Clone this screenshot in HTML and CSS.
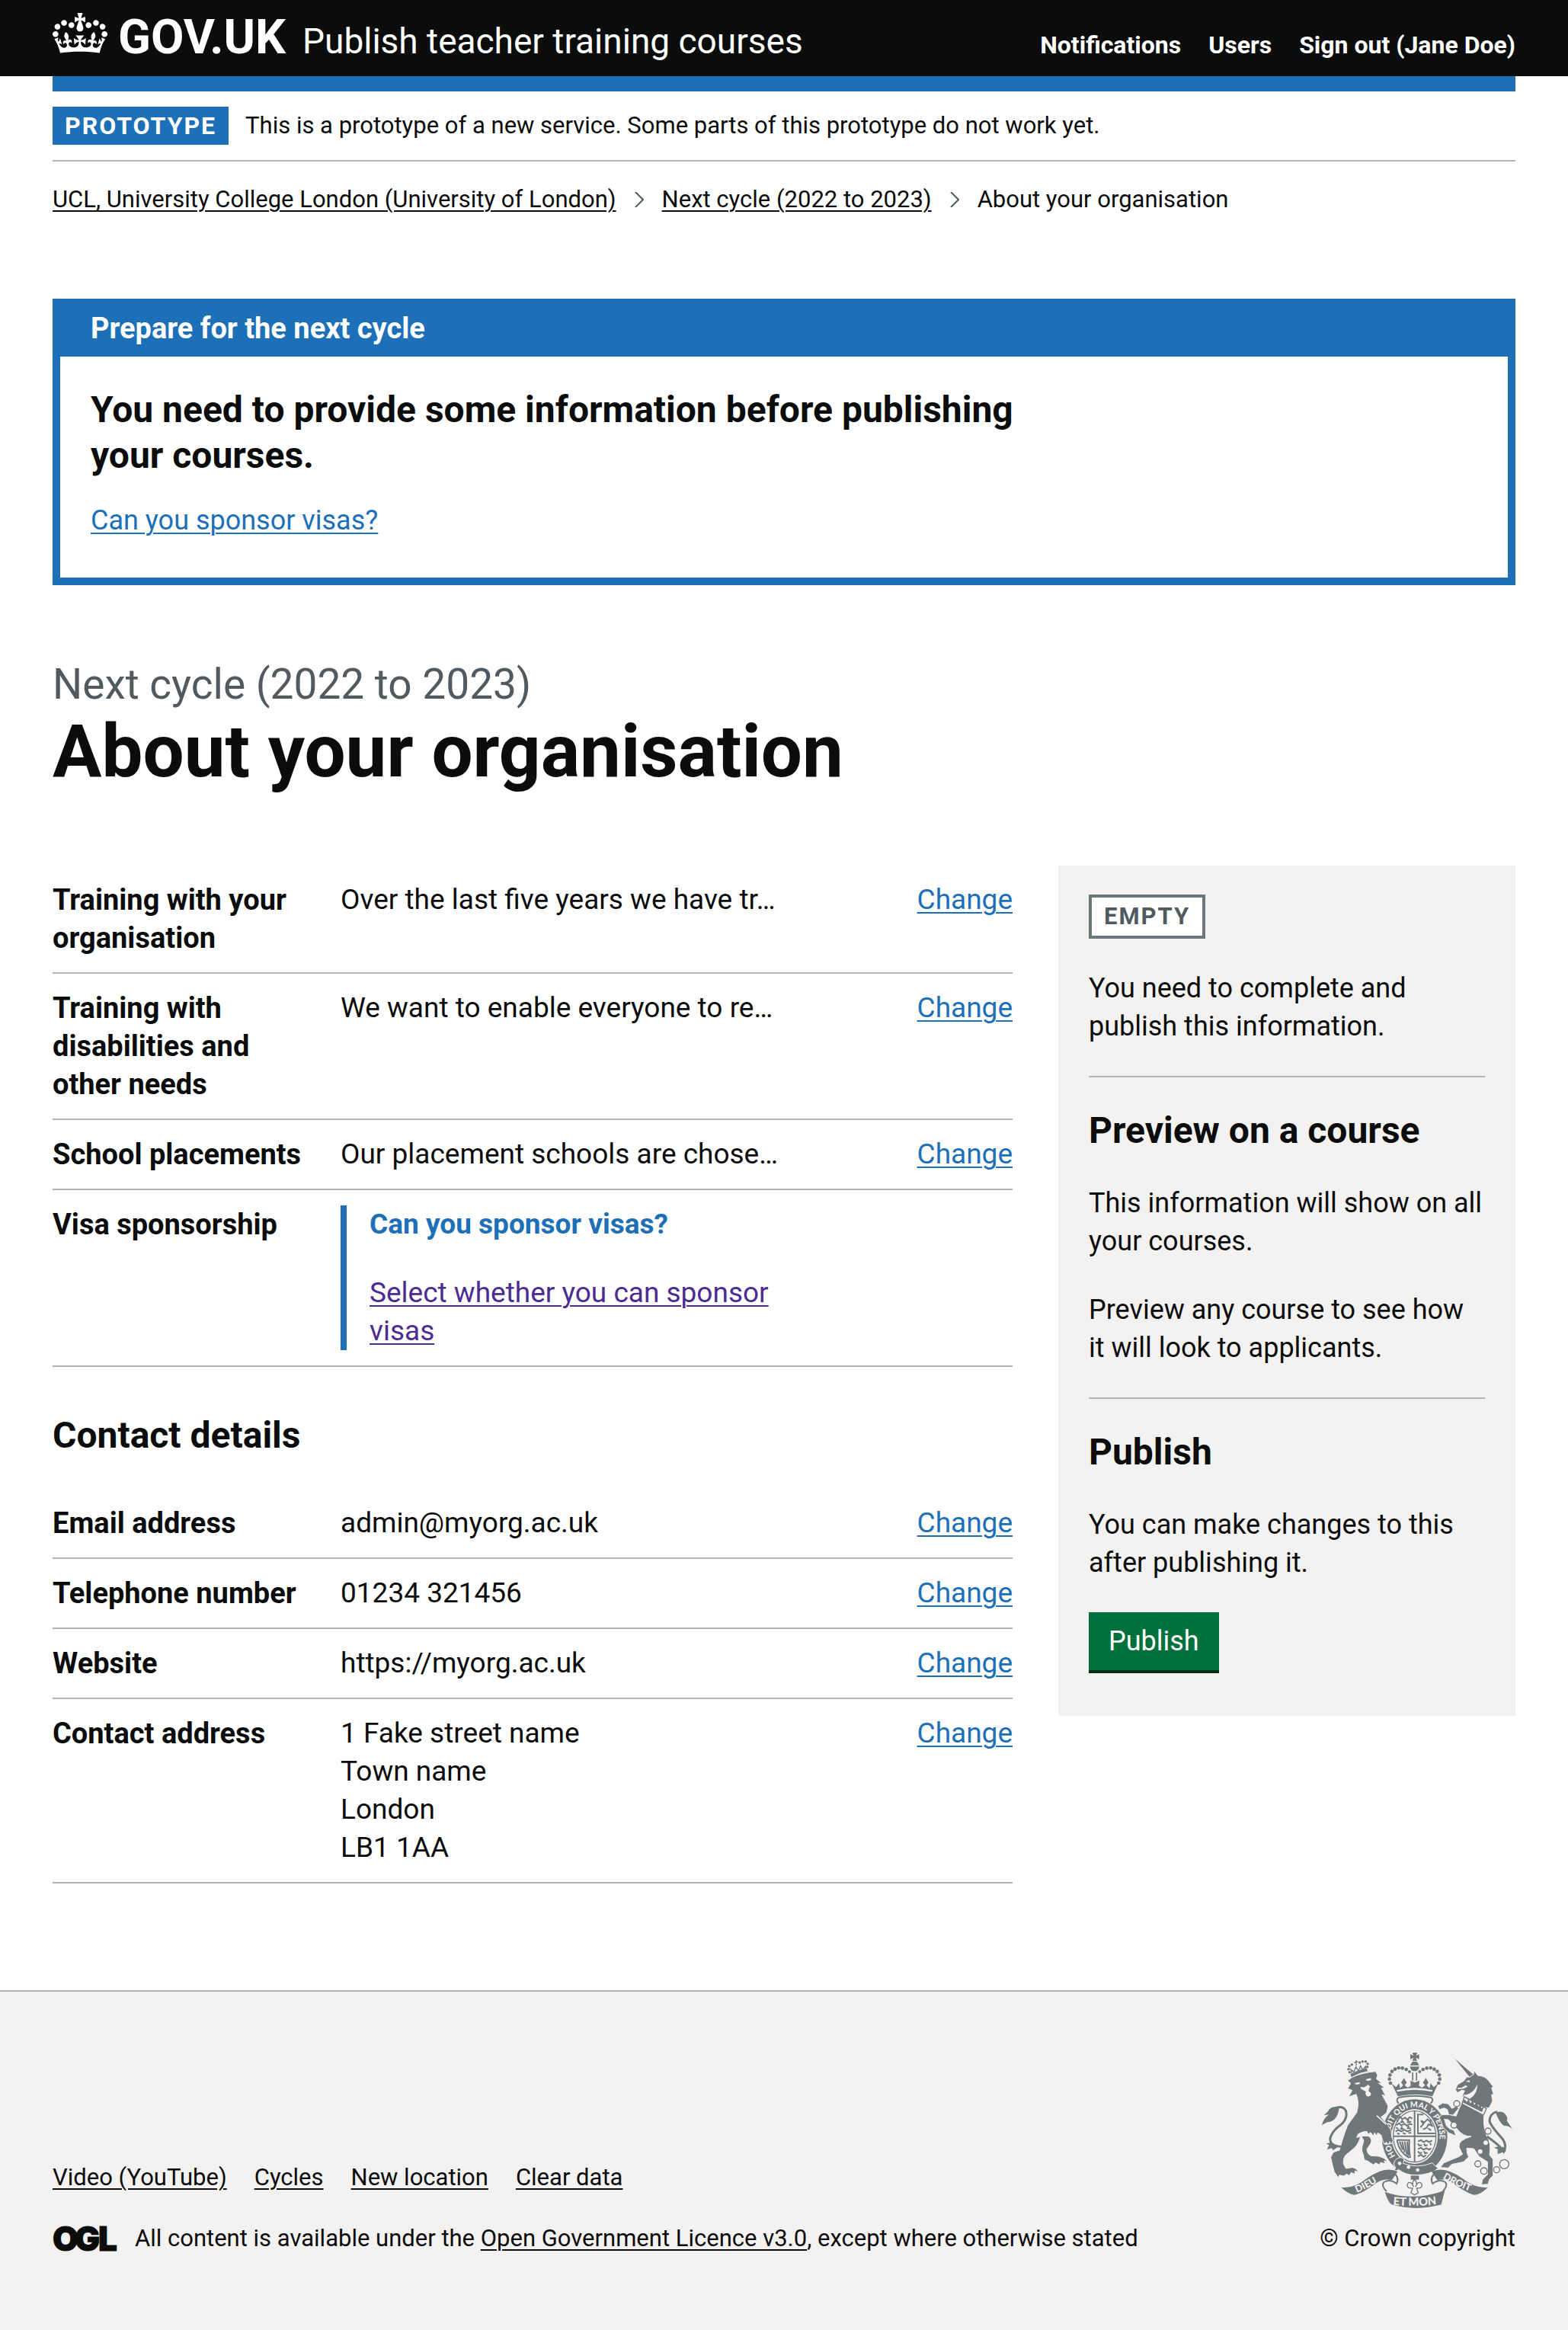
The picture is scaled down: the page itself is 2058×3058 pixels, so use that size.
FILE: index.html
```html
<!DOCTYPE html>
<html lang="en">
<head>
<meta charset="utf-8">
<meta name="viewport" content="width=device-width, initial-scale=1">
<title>About your organisation - Publish teacher training courses</title>
<link rel="stylesheet" href="styles.css">
</head>
<body>
<header class="header">
  <div class="container header-inner">
    <a class="logo" href="#">
      <svg class="crown" viewBox="0 0 132 97" aria-hidden="true"><path fill="currentColor" fill-rule="evenodd" d="M25 30.2c3.5 1.5 7.7-.2 9.1-3.7 1.5-3.6-.2-7.8-3.9-9.2-3.6-1.4-7.6.3-9.1 3.9-1.4 3.5.3 7.5 3.9 9zM9 39.5c3.6 1.5 7.8-.2 9.2-3.7 1.5-3.6-.2-7.8-3.9-9.1-3.6-1.5-7.6.2-9.1 3.8-1.4 3.5.3 7.5 3.8 9zM4.4 57.2c3.5 1.5 7.7-.2 9.1-3.8 1.5-3.6-.2-7.7-3.9-9.1-3.5-1.5-7.6.3-9.1 3.8-1.4 3.5.3 7.6 3.9 9.1zm38.3-21.4c3.5 1.5 7.7-.2 9.1-3.8 1.5-3.6-.2-7.7-3.9-9.1-3.6-1.5-7.6.3-9.1 3.8-1.3 3.6.4 7.7 3.9 9.1zm64.4-5.6c-3.6 1.5-7.8-.2-9.1-3.7-1.5-3.6.2-7.8 3.8-9.2 3.6-1.4 7.7.3 9.2 3.9 1.3 3.5-.4 7.5-3.9 9zm15.9 9.3c-3.6 1.5-7.7-.2-9.1-3.7-1.5-3.6.2-7.8 3.7-9.1 3.6-1.5 7.7.2 9.2 3.8 1.5 3.5-.3 7.5-3.8 9zm4.7 17.7c-3.6 1.5-7.8-.2-9.2-3.8-1.5-3.6.2-7.7 3.9-9.1 3.6-1.5 7.7.3 9.2 3.8 1.3 3.5-.4 7.6-3.9 9.1zM89.3 35.8c-3.6 1.5-7.8-.2-9.2-3.8-1.4-3.6.2-7.7 3.9-9.1 3.6-1.5 7.7.3 9.2 3.8 1.4 3.6-.3 7.7-3.9 9.1zM69.7 17.7l8.9 4.7V9.3l-8.9 2.8c-.2-.3-.5-.6-.9-.9L72.4 0H59.6l3.5 11.2c-.3.3-.6.5-.9.9l-8.8-2.8v13.1l8.8-4.7c.3.3.6.7.9.9l-5 15.4v.1c-.2.8-.4 1.6-.4 2.4 0 4.1 3.1 7.5 7 8.1h.2c.3 0 .7.1 1 .1.4 0 .7 0 1-.1h.2c4-.6 7.1-4.1 7.1-8.1 0-.8-.1-1.7-.4-2.4V34l-5.1-15.4c.4-.2.7-.6 1-.9zM66 92.8c16.9 0 32.8 1.1 47.1 3.2 4-16.9 8.9-26.7 14-33.5l-9.6-3.4c1 4.9 1.1 7.2 0 10.2-1.5-1.4-3-4.3-4.2-8.7L108.6 76c2.8-2 5-3.2 7.5-3.3-4.4 9.4-10 11.9-13.6 11.2-4.3-.8-6.3-4.6-5.6-7.9 1-4.7 5.7-5.9 8-.5 4.3-8.7-3-11.4-7.6-8.8 7.1-7.2 7.9-13.5 2.1-21.1-8 6.1-8.1 12.3-4.5 20.8-4.7-5.4-12.1-2.5-9.5 6.2 3.4-5.2 7.9-2 7.2 3.1-.6 4.3-6.4 7.8-13.5 7.2-10.3-.9-10.9-8-11.2-13.8 2.5-.5 7.1 1.8 11 7.3L80.2 60c-4.1 4.4-8 5.3-12.3 5.4 1.4-4.4 8-11.6 8-11.6H55.5s6.4 7.2 7.9 11.6c-4.2-.1-8-1-12.3-5.4l1.4 16.4c3.9-5.5 8.5-7.7 10.9-7.3-.3 5.8-.9 12.8-11.1 13.8-7.2.6-12.9-2.9-13.5-7.2-.7-5 3.8-8.3 7.1-3.1 2.7-8.7-4.6-11.6-9.4-6.2 3.7-8.5 3.6-14.7-4.6-20.8-5.8 7.6-5 13.9 2.2 21.1-4.7-2.6-11.9.1-7.7 8.8 2.3-5.5 7.1-4.2 8.1.5.7 3.3-1.3 7.1-5.7 7.9-3.5.7-9-1.8-13.5-11.2 2.5.1 4.7 1.3 7.5 3.3l-4.7-15.4c-1.2 4.4-2.7 7.2-4.3 8.7-1.1-3-.9-5.3 0-10.2l-9.5 3.4c5 6.9 9.9 16.7 14 33.5 14.8-2.1 30.8-3.2 47.7-3.2z"/></svg>
      <span class="logo-text">GOV.UK</span>
    </a>
    <a class="service-name" href="#">Publish teacher training courses</a>
    <nav class="header-nav" aria-label="Account">
      <a href="#">Notifications</a>
      <a href="#">Users</a>
      <a href="#">Sign out (Jane Doe)</a>
    </nav>
  </div>
</header>

<div class="container">
  <div class="header-bar"></div>
  <div class="phase-banner">
    <strong class="phase-tag">PROTOTYPE</strong>
    <span>This is a prototype of a new service. Some parts of this prototype do not work yet.</span>
  </div>
  <nav class="breadcrumbs" aria-label="Breadcrumb">
    <a href="#">UCL, University College London (University of London)</a>
    <svg class="chevron" viewBox="0 0 12 20" aria-hidden="true"><path d="M1 0 11 10 1 20" fill="none" stroke="currentColor" stroke-width="2"/></svg>
    <a href="#">Next cycle (2022 to 2023)</a>
    <svg class="chevron" viewBox="0 0 12 20" aria-hidden="true"><path d="M1 0 11 10 1 20" fill="none" stroke="currentColor" stroke-width="2"/></svg>
    <span>About your organisation</span>
  </nav>

  <main class="main">
    <section class="notice" aria-labelledby="notice-title">
      <h2 class="notice-title" id="notice-title">Prepare for the next cycle</h2>
      <div class="notice-body">
        <p class="notice-heading">You need to provide some information before publishing your courses.</p>
        <a class="link" href="#">Can you sponsor visas?</a>
      </div>
    </section>

    <h1 class="page-title"><span class="caption">Next cycle (2022 to 2023)</span>About your organisation</h1>

    <div class="columns">
      <div class="details">
        <dl class="summary">
          <div class="row"><dt>Training with your organisation</dt><dd class="value">Over the last five years we have tr…</dd><dd class="action"><a class="link" href="#">Change</a></dd></div>
          <div class="row"><dt>Training with disabilities and other needs</dt><dd class="value">We want to enable everyone to re…</dd><dd class="action"><a class="link" href="#">Change</a></dd></div>
          <div class="row"><dt>School placements</dt><dd class="value">Our placement schools are chose…</dd><dd class="action"><a class="link" href="#">Change</a></dd></div>
          <div class="row"><dt>Visa sponsorship</dt><dd class="value"><div class="inset"><p class="inset-title">Can you sponsor visas?</p><a class="link visited" href="#">Select whether you can sponsor visas</a></div></dd></div>
        </dl>
        <h2 class="heading contact-heading">Contact details</h2>
        <dl class="summary">
          <div class="row"><dt>Email address</dt><dd class="value">admin@myorg.ac.uk</dd><dd class="action"><a class="link" href="#">Change</a></dd></div>
          <div class="row"><dt>Telephone number</dt><dd class="value">01234 321456</dd><dd class="action"><a class="link" href="#">Change</a></dd></div>
          <div class="row"><dt>Website</dt><dd class="value">https://myorg.ac.uk</dd><dd class="action"><a class="link" href="#">Change</a></dd></div>
          <div class="row"><dt>Contact address</dt><dd class="value">1 Fake street name<br>Town name<br>London<br>LB1 1AA</dd><dd class="action"><a class="link" href="#">Change</a></dd></div>
        </dl>
      </div>

      <aside class="sidebar">
        <strong class="status-tag">EMPTY</strong>
        <p>You need to complete and publish this information.</p>
        <hr>
        <h2 class="heading">Preview on a course</h2>
        <p>This information will show on all your courses.</p>
        <p>Preview any course to see how it will look to applicants.</p>
        <hr>
        <h2 class="heading">Publish</h2>
        <p>You can make changes to this after publishing it.</p>
        <button class="button" type="button">Publish</button>
      </aside>
    </div>
  </main>
</div>

<footer class="footer">
  <div class="container footer-inner">
    <div class="footer-meta">
      <nav class="footer-links" aria-label="Support links">
        <a href="#">Video (YouTube)</a>
        <a href="#">Cycles</a>
        <a href="#">New location</a>
        <a href="#">Clear data</a>
      </nav>
      <div class="licence">
        <svg class="ogl" viewBox="0 0 90 60" aria-label="OGL"><text class="ogl-text" y="46"><tspan x="0">O</tspan><tspan x="29">G</tspan><tspan x="60">L</tspan></text></svg>
        <span>All content is available under the <a href="#">Open Government Licence v3.0</a>, except where otherwise stated</span>
      </div>
    </div>
    <a class="copyright" href="#">
      <svg class="crest" viewBox="102 102 750 612" aria-hidden="true">
        <defs>
          <path id="motto-arc" d="M392 509A98 117 0 1 1 536 517"/>
          <path id="dieu-arc" d="M240 654Q300 628 356 588"/>
          <path id="mon-arc" d="M382 701Q467 711 570 697"/>
          <path id="droit-arc" d="M577 597Q640 634 722 661"/>
        </defs>
        <!-- royal crown -->
        <g class="ink">
          <path d="M458 102h20l-6 12 13-6v20l-13-6 5 12h-19l5-12-13 6v-20l13 6zM459 137h17l9 15h-36zM449 157h36q-2 18-18 18t-18-18zM457 180h5v32h-5zM472 180h5v32h-5z"/>
          <path d="M377 224l17 14 12-16 4 20 12-12-8-10 11-18 11 18-8 10 12 10 12-8-2-20 18 8 18-8-2 20 12 8 12-10-8-10 11-18 11 18-8 10 12 12 4-20 12 16 17-14-22 50q-66-16-136 0z"/>
          <circle cx="372" cy="222" r="7"/><circle cx="368" cy="206" r="7"/><circle cx="370" cy="190" r="7"/><circle cx="378" cy="176" r="7"/><circle cx="390" cy="167" r="7"/><circle cx="404" cy="162" r="7"/><circle cx="419" cy="163" r="7"/><circle cx="434" cy="168" r="7"/><circle cx="447" cy="177" r="6"/>
          <circle cx="562" cy="222" r="7"/><circle cx="566" cy="206" r="7"/><circle cx="564" cy="190" r="7"/><circle cx="556" cy="176" r="7"/><circle cx="544" cy="167" r="7"/><circle cx="530" cy="162" r="7"/><circle cx="515" cy="163" r="7"/><circle cx="500" cy="168" r="7"/><circle cx="487" cy="177" r="6"/>
        </g>
        <path class="paper" d="M396 250q71-18 142 0l-3 6q-68-16-136 0z"/>
        <path class="line" d="M404 302q-14-16 2-24 61-12 124 0 16 8 0 24"/>
        <!-- garter -->
        <ellipse class="ink" cx="467" cy="434" rx="129" ry="148"/>
        <ellipse class="paper" cx="467" cy="432" rx="91" ry="108"/>
        <text class="motto"><textPath href="#motto-arc">HONI SOIT QUI MAL Y PENSE</textPath></text>
        <ellipse class="line thin" cx="467" cy="432" rx="84" ry="101"/>
        <path class="line" d="M467 332v202M384 431h166"/>
        <g class="line squiggle">
          <path d="M400 362l10-8 8 10 12-6 8 8 10-10 10 6M396 366l6 8M420 368l-6 8 12 0M444 366l-4 10 14-2M394 388l12-8 8 8 14-6 8 8 12-8 10 4M394 396l8 6M418 392l-4 10 10 0M444 390l-4 10 12 0M392 412l12-6 10 6 14-6 10 6 16-6M398 420l10 2M420 418l12 4M442 418l12 0"/>
          <path d="M480 452l12-6 10 8 12-6 10 6 12-6M480 460l6 8 10-2M504 460l4 8 10-2M528 458l4 8M480 482l12-6 10 8 12-6 10 6 8-6M480 490l6 8 10-2M504 490l4 8 10-2M480 510l12-6 10 8 10-6"/>
          <path d="M484 346h18M480 342v78h68M490 396l12-14-10-12 14 6 12-12 10 10 8 16-14-6-8 14-14 6M528 372l4-8M520 400l12 8"/>
          <path d="M396 446h50q-2 40 4 70M398 448q8 46 48 68M408 452l12 32M418 452l10 42M428 452l8 50M438 452l4 56"/>
        </g>
        <path class="ink edge" d="M392 524q16-16 34-4l-4 18q56 22 114-2l24 22q-34 26-92 26-36 0-64-22-6 8-18 4 8-8 4-16-10-12 2-26z"/>
        <circle class="paper" cx="408" cy="538" r="7"/><circle class="paper" cx="443" cy="553" r="7"/><circle class="paper" cx="479" cy="564" r="7"/>
        <!-- lion -->
        <g class="ink edge">
          <path d="M203 212l20-14q40-18 90-22l8 14-4 16 22 16-14 0 26 20-14 0 16 30-14-4 12 22 12 22-6 26-22 18 26 30 14 22 2 26 6 14-8 14-6-10-6 12-8-10-8 8-6-16-6-20-14-8-2 12-10-12-4 12-12-14-8 8-6-12-16 2-18 8-6 14q34-10 48-4 16 10 6 30l-14 20q2 22 18 26l30 2 20 8 14 12-14-2 4 12-18-6-4 10-16-8-8 8-24-16-12-4-4-20-6-18 2-16 6-22-12-20q-6 30-26 50l-32 26q-12 12-10 36l10 18 24-4 14 4 12 14-14-4-2 12-14-6-6 12-12-6-10 8-18-4-4 10-16-22-10-38-4-20 10-20 24-8 16-54 16-44 36-50q12-40-2-72l-30 10 14-26-18-6 12-22z"/>
          <path d="M212 186q30-18 68-24l4 14q-34 4-66 24z"/>
        </g>
        <path class="line edge-gap" d="M318 350l36 34"/>
        <path class="line thin" d="M222 188l-6-20 12 10 8-20 10 16 8-20 8 16 12-14 0 16M237 132v22M229 141l15-3"/>
        <g class="ink"><circle cx="210" cy="155" r="5"/><circle cx="220" cy="149" r="5"/><circle cx="251" cy="141" r="5"/><circle cx="262" cy="137" r="5"/><circle cx="274" cy="137" r="5"/><circle cx="282" cy="146" r="5"/><circle cx="281" cy="158" r="5"/><circle cx="207" cy="167" r="5"/><circle cx="211" cy="179" r="5"/></g>
        <path class="paper" d="M230 222l20-4 2 6-14 4zM274 208l20-6 2 8-14 4zM252 238l18 0 14-10 8 8q-10 12-4 20 10 4 6 14-8 8-16 2-8-8-2-16l-18-10z"/>
        <path class="line tail" d="M178 472q-52-4-42-38 8-24 38-46 32-26 22-58-12-20-40-10"/>
        <path class="ink" d="M170 318q-24-8-38 6-8 14-22 24l20-2q-24 16-28 42 16-14 32-14 30-8 36-56zM140 456l-22 4 12 6-8 18 18-6 6 8 22-14z"/>
        <!-- unicorn -->
        <g class="ink edge">
          <path d="M616 116l86 74-18 10z"/>
          <path d="M686 198q4-8 12-8l4-16 14 18q30 2 42 20l20 26-8 2 8 26-8 2 4 24-14 28-42-6-64-42 10-20-12-2-16 10-8-12 8-20 26-16 10-14z"/>
          <path d="M652 300L740 350Q736 396 752 432 770 460 762 505L776 522V586L762 600 756 620 730 622 734 602 754 582V532L722 512 700 480 672 478 674 498 680 512 660 532 612 542 600 556 568 554 582 536 640 512 656 502 642 474Q638 446 690 432 656 432 636 404L600 366 584 364 592 390 606 402 622 408 630 430 602 418 580 398 564 356 576 346 604 346 630 352 640 328z"/>
          <path d="M640 322l-22 26-16-2-6-20-12-6-20 6-6-14 20-12 22 4 14 18 18-10z"/>
        </g>
        <path class="paper" d="M636 240l16 0 16-10 8 6-16 8-22 2zM652 268q44 4 62-42 2 38-30 58zM668 216l14-6 4 8z"/>
        <path class="paper collar" d="M662 276l88 46-12 26-84-44z"/>
        <path class="ink" d="M664 286l8 10 8-12 6 18 10-12 6 18 10-12 6 18 10-10 2 16 10-4-8 20-78-40z"/>
        <path class="line tail" d="M752 432q50 34 66 60 14-24-6-52-44-48-50-68 0-30 30-38"/>
        <path class="ink" d="M786 338q24-10 38 6 12 14 6 26l22 32q-16-14-32-12-18-10-34-52zM800 470l-20 6 14 6 0 20 18-8 14-2-2-16z"/>
        <g class="line thin bubbles"><circle cx="820" cy="541" r="18"/><circle cx="790" cy="563" r="12"/><circle cx="740" cy="568" r="13"/><circle cx="716" cy="540" r="12"/><circle cx="756" cy="411" r="12"/><circle cx="622" cy="387" r="12"/><circle cx="633" cy="303" r="12"/></g>
        <circle class="paper" cx="747" cy="457" r="9"/><circle class="paper" cx="725" cy="491" r="9"/>
        <!-- scrolls -->
        <path class="ink" d="M178 632q50 6 100-34 70-52 122-28l-22 34q-30-8-60 10-60 44-88 48-26-4-52-30zM756 632q-50 6-100-34-70-52-122-28l22 34q30-8 60 10 60 44 88 48 26-4 52-30z"/>
        <path class="line" d="M380 572q30 20 16 46-26-20-50-6-12 12 10 36M554 572q-30 20-16 46 26-20 50-6 12 12-10 36"/>
        <path class="ink" d="M350 650q110 40 236-6l-14 56q-100 28-196 0-16-14-26-50z"/>
        <text class="scroll"><textPath href="#dieu-arc">DIEU</textPath></text>
        <text class="scroll big"><textPath href="#mon-arc">ET MON</textPath></text>
        <text class="scroll"><textPath href="#droit-arc">DROIT</textPath></text>
        <path class="ink" d="M452 586h32v16h-32z"/>
        <path class="line thin" d="M467 600q-14 16-4 30-8-20-20-16-10 8 0 20l16 2-6 18 14 8 14-8-6-18 16-2q10-12 0-20-12-4-20 16 10-14-4-30z"/>
      </svg>
      <span>© Crown copyright</span>
    </a>
  </div>
</footer>
</body>
</html>
```
FILE: styles.css
```css
* { box-sizing: border-box; }

:root {
  --ink: #0b0c0c;
  --blue: #1d70b8;
  --rule: #b1b4b6;
  --muted: #505a5f;
  --panel: #f3f2f1;
  --crest: #6f777b;
}

body {
  margin: 0;
  background: #fff;
  color: var(--ink);
  font-family: Roboto, "Liberation Sans", sans-serif;
  font-size: 37px;
  line-height: 50px;
}

h1, h2, p, dl, dd { margin: 0; }

a {
  color: inherit;
  text-decoration-thickness: 2px;
  text-underline-offset: 4px;
}

.container {
  width: calc(100% - 60px);
  max-width: 1920px;
  margin: 0 auto;
}

/* Header */
.header { background: var(--ink); color: #fff; }
.header a { text-decoration: none; }
.header-inner {
  display: flex;
  align-items: baseline;
  height: 100px;
  padding-top: 13px;
}
.logo { display: flex; align-items: baseline; gap: 14px; margin-right: 22px; }
.crown { width: 72px; height: 53px; margin-bottom: -7px; }
.logo-text { font-size: 63px; line-height: 72px; font-weight: 700; }
.service-name { font-size: 46px; line-height: 60px; }
.header-nav {
  display: flex;
  gap: 36px;
  margin-left: auto;
  font-size: 32px;
  line-height: 40px;
  font-weight: 700;
}
.header-bar { height: 20px; background: var(--blue); }

/* Phase banner and breadcrumbs */
.phase-banner {
  display: flex;
  align-items: center;
  gap: 22px;
  padding: 20px 0;
  border-bottom: 2px solid var(--rule);
  font-size: 31px;
  line-height: 40px;
}
.phase-tag {
  padding: 5px 16px;
  background: var(--blue);
  color: #fff;
  font-size: 32px;
  letter-spacing: 2px;
}
.breadcrumbs {
  display: flex;
  align-items: center;
  flex-wrap: wrap;
  padding-top: 30px;
  font-size: 31px;
  line-height: 40px;
}
.chevron { width: 12px; height: 20px; margin: 0 24px; color: var(--muted); }

.main { padding: 110px 0 140px; }

.link { color: var(--blue); }
.link.visited { color: #4c2c92; }

/* Notification banner */
.notice { border: 10px solid var(--blue); margin-bottom: 100px; }
.notice-title {
  padding: 4px 40px 12px;
  background: var(--blue);
  color: #fff;
  font-size: 38px;
  line-height: 50px;
}
.notice-body { padding: 40px 40px 50px; font-size: 36px; }
.notice-heading {
  max-width: 1260px;
  margin-bottom: 30px;
  font-size: 48px;
  line-height: 60px;
  font-weight: 700;
}

/* Page heading */
.page-title {
  margin-bottom: 100px;
  font-size: 96px;
  line-height: 100px;
}
.caption {
  display: block;
  margin-bottom: 8px;
  color: var(--muted);
  font-size: 55px;
  line-height: 60px;
  font-weight: 400;
}

.columns {
  display: grid;
  grid-template-columns: 1260fr 600fr;
  gap: 60px;
  align-items: start;
}

/* Summary lists */
.row {
  display: grid;
  grid-template-columns: 30% 50% 20%;
  padding: 20px 0;
  border-bottom: 2px solid var(--rule);
}
.row dt { padding-right: 40px; font-size: 38px; font-weight: 700; }
.value { padding-right: 40px; }
.action { text-align: right; }
.inset { border-left: 8px solid var(--blue); padding-left: 30px; }
.inset-title { margin-bottom: 40px; color: var(--blue); font-weight: 700; }

.heading { font-size: 48px; line-height: 60px; }
.contact-heading { margin: 60px 0 40px; }

/* Sidebar */
.sidebar { padding: 38px 40px 60px; background: var(--panel); font-size: 36px; }
.sidebar p, .sidebar .heading { margin-bottom: 40px; }
.sidebar hr { margin: 0 0 40px; border: 0; border-top: 2px solid var(--rule); }
.status-tag {
  display: table;
  margin-bottom: 40px;
  padding: 5px 16px;
  border: 4px solid #6c777c;
  background: #fff;
  color: var(--muted);
  font-size: 31px;
  line-height: 40px;
  letter-spacing: 2px;
}
.button {
  display: block;
  padding: 13px 26px;
  border: 0;
  background: #00703c;
  box-shadow: 0 4px 0 #002d18;
  color: #fff;
  font: inherit;
}

/* Footer */
.footer {
  padding: 80px 0 100px;
  border-top: 2px solid var(--rule);
  background: var(--panel);
  font-size: 31px;
  line-height: 40px;
}
.footer-inner { display: flex; justify-content: space-between; align-items: flex-end; }
.footer-links { display: flex; gap: 36px; margin-bottom: 40px; }
.licence { display: flex; align-items: center; gap: 18px; }
.ogl { width: 90px; height: 60px; margin: -10px 0; }
.ogl-text {
  fill: var(--ink);
  stroke: var(--ink);
  stroke-width: 1px;
  font-family: Inter, sans-serif;
  font-size: 44px;
  font-weight: 900;
}
.copyright {
  display: flex;
  flex-direction: column;
  align-items: flex-end;
  gap: 20px;
  text-decoration: none;
}
.crest { width: 250px; height: 204px; margin-right: 4px; }
.ink { fill: var(--crest); }
.edge { stroke: var(--panel); stroke-width: 3px; }
.paper { fill: var(--panel); }
.collar { stroke: var(--crest); stroke-width: 4px; }
.line { fill: none; stroke: var(--crest); stroke-width: 6px; }
.edge-gap { stroke: var(--panel); stroke-width: 5px; }
.thin { stroke-width: 4px; }
.tail { stroke-width: 9px; }
.squiggle { stroke-width: 6px; }
.bubbles { fill: var(--panel); }
.motto { fill: var(--panel); font-family: Lato, sans-serif; font-size: 31px; font-weight: 900; }
.scroll { fill: var(--panel); font-family: Lato, sans-serif; font-size: 38px; font-weight: 900; }
.big { font-size: 44px; }
```
